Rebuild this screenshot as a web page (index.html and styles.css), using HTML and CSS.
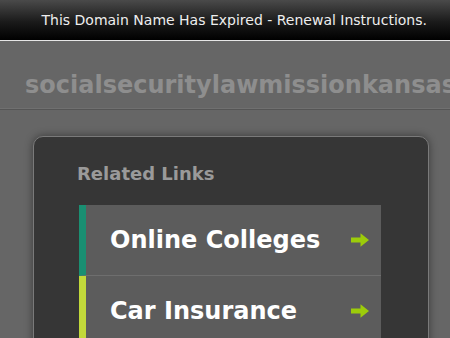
FILE: index.html
```html
<!DOCTYPE html>
<html lang="en">
<head>
    <meta charset="UTF-8">
    <title>socialsecuritylawmissionkansas</title>
    <link rel="stylesheet" href="styles.css">
</head>
<body>
    <!-- Expired notice -->
    <div class="topbar">
        <a href="#" class="notice">This Domain Name Has Expired - Renewal Instructions.</a>
    </div>

    <!-- Domain title -->
    <div class="domain">
        <h1 class="domain-name">socialsecuritylawmissionkansas.com</h1>
    </div>

    <!-- Related links -->
    <div class="content">
        <div class="panel">
            <h2 class="panel-title">Related Links</h2>
            <ul class="links">
                <li class="link teal">
                    <a href="#">Online Colleges</a>
                    <svg class="arrow" width="20" height="16" viewBox="0 0 20 16"><path d="M1 5.6h9.5V1.2L19 8l-8.5 6.8v-4.4H1z" fill="#9ccc0a"/></svg>
                </li>
                <li class="link lime">
                    <a href="#">Car Insurance</a>
                    <svg class="arrow" width="20" height="16" viewBox="0 0 20 16"><path d="M1 5.6h9.5V1.2L19 8l-8.5 6.8v-4.4H1z" fill="#9ccc0a"/></svg>
                </li>
            </ul>
        </div>
    </div>
</body>
</html>
```

FILE: styles.css
```css
* {
    margin: 0;
    padding: 0;
    box-sizing: border-box;
}

body {
    background-color: #666666;
    font-family: "DejaVu Sans", sans-serif;
    overflow: hidden;
    height: 100vh;
}

/* Top bar */
.topbar {
    height: 41px;
    background: linear-gradient(#4a4a4a, #1a1a1a 55%, #000000);
    border-bottom: 1px solid #e6e6e6;
    display: flex;
    justify-content: flex-end;
    align-items: center;
    padding-right: 23px;
}

.notice {
    color: #eeeeee;
    font-size: 14px;
    text-decoration: none;
    padding-bottom: 1px;
}

/* Domain title */
.domain {
    height: 69px;
    border-bottom: 1px solid #555555;
    box-shadow: 0 -3px 0 -2px #707070 inset;
    padding: 29px 0 0 25px;
    white-space: nowrap;
    overflow: hidden;
}

.domain-name {
    font-size: 24px;
    font-weight: bold;
    color: #8e8e8e;
    line-height: 30px;
}

/* Panel */
.content {
    padding: 26px 21px 0 33px;
}

.panel {
    background-color: #363636;
    border: 1px solid #7a7a7a;
    border-radius: 10px;
    box-shadow: 0 0 8px rgba(0, 0, 0, 0.45);
    padding: 25px 47px 0 43px;
    height: 220px;
}

.panel-title {
    font-size: 18px;
    font-weight: bold;
    color: #9a9a9a;
    line-height: 24px;
    margin-bottom: 19px;
}

.links {
    list-style: none;
    margin-left: 2px;
}

.link {
    height: 71px;
    background-color: #5c5c5c;
    border-left: 7px solid #1a8f72;
    border-bottom: 1px solid #6e6e6e;
    display: flex;
    justify-content: space-between;
    align-items: center;
    padding: 0 11px 1px 24px;
}

.link.teal {
    border-left-color: #1a8f72;
}

.link.lime {
    border-left-color: #c2d93a;
}

.link a {
    color: #ffffff;
    font-size: 24px;
    font-weight: bold;
    text-decoration: none;
}

.arrow {
    display: block;
}
```
